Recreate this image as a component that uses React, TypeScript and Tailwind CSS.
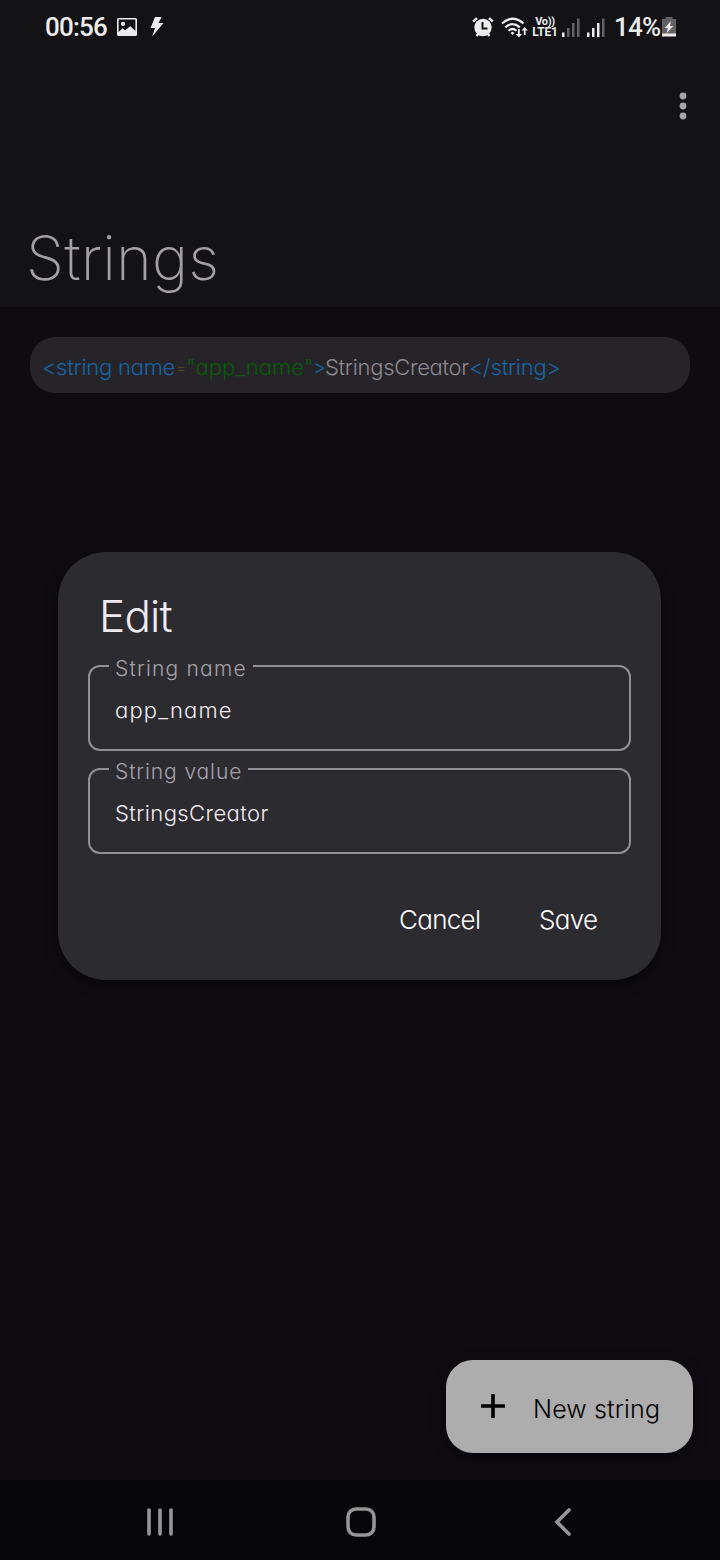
import type { ReactNode } from "react";

function StatusBar() {
  return (
    <div className="flex h-[54px] items-center justify-between pl-[45px] pr-[44px] text-[#ececec]">
      <div className="flex items-center">
        <span className="w-[62px] whitespace-nowrap font-[Roboto] text-[26px] leading-[54px] font-medium tracking-[-0.8px]">00:56</span>
        <svg className="ml-[10px]" width="20" height="18" viewBox="0 0 20 18">
          <path fillRule="evenodd" fill="currentColor" d="M1.500 0h17A1.500 1.500 0 0 1 20 1.500v15a1.500 1.500 0 0 1-1.500 1.500h-17A1.500 1.500 0 0 1 0 16.500v-15A1.500 1.500 0 0 1 1.500 0ZM1.600 1.600V14l4-3.700 2.500 2 5.200-4 5.100 4.700V1.600ZM6 3.800a2.100 2.100 0 1 1 0 4.200a2.100 2.100 0 0 1 0-4.200Z" />
        </svg>
        <svg className="ml-[13px]" width="15" height="20" viewBox="0 0 15 20">
          <path fill="currentColor" d="M5 0h6.500L8.500 6H13.500L2.200 19.500 5 11H.500Z" />
        </svg>
      </div>
      <div className="flex items-center">
        <svg width="22" height="20" viewBox="0 0 22 20">
          <circle cx="11" cy="10.500" r="8.700" fill="currentColor" />
          <path d="M1.200 4.500 5 1.200M20.800 4.500 17 1.200M4.500 19l2.500-3M17.500 19 15 16" stroke="currentColor" strokeWidth="2.400" />
          <path d="M10.500 5v6.500H15.500" fill="none" stroke="#131315" strokeWidth="2" />
        </svg>
        <svg className="ml-[7px]" width="27" height="22" viewBox="0 0 27 22">
          <g fill="none" stroke="currentColor" strokeWidth="2.200">
            <path d="M1 7.500Q11.500-2 22.500 7.500M4.300 11.300q7.200-6.300 14.500 0M7.500 14.800q4-3.600 8 0" />
          </g>
          <path fill="currentColor" d="m9.500 16.700 2-1 2 1-2 2.300ZM17 13h1.800v5h2.200l-3.100 3.500-3.100-3.500H17ZM22.800 19v-4.500h-2.200l3.100-3.500 3.100 3.500h-2.200V19Z" />
        </svg>
        <div className="ml-[4px] flex w-[26px] flex-col items-center font-[Roboto] text-[12px] leading-[11px] font-bold whitespace-nowrap">
          <span className="text-[11px] tracking-[-0.3px]">Vo))</span>
          <span className="tracking-[-0.2px]">LTE1</span>
        </div>
        <svg className="ml-[4px]" width="18" height="19" viewBox="0 0 18 19">
          <path fill="currentColor" d="M0 14.500h2.500V19H0Z" />
          <path fill="#626264" d="M5 10h2.500v9H5ZM10 5h2.500v14H10ZM15 .500h2.500V19H15Z" />
        </svg>
        <svg className="ml-[7px]" width="18" height="19" viewBox="0 0 18 19">
          <path fill="currentColor" d="M0 14.500h2.500V19H0ZM5 10h2.500v9H5ZM10 5h2.500v14H10Z" />
          <path fill="#626264" d="M15 .500h2.500V19H15Z" />
        </svg>
        <span className="ml-[9px] w-[47px] whitespace-nowrap font-[Roboto] text-[26px] leading-[54px] font-medium tracking-[-0.8px]">14%</span>
        <svg className="ml-[1px]" width="14" height="20" viewBox="0 0 14 20">
          <path fill="#626264" d="M3.500 0h7v2H14v15H0V2h3.500Z" />
          <path fill="currentColor" d="M0 16.500h14V19.500H0ZM8.800 4 2.800 11h3l-1 5 6.400-7H8Z" />
        </svg>
      </div>
    </div>
  );
}

function Field({ label, labelClass, children }: { label: string; labelClass: string; children: ReactNode }) {
  return (
    <div className="relative h-[86px] rounded-[12px] border-2 border-[#909095] pt-[29px] pl-[25px]">
      <span className={`absolute top-[-12px] left-[19px] bg-[#2c2b30] pl-[6px] text-[21px] leading-[28px] font-light whitespace-nowrap text-[#a5a2a9] ${labelClass}`}>
        {label}
      </span>
      {children}
    </div>
  );
}

function EditDialog() {
  return (
    <div className="absolute top-[552px] left-[58px] flex h-[428px] w-[603px] flex-col rounded-[48px] bg-[#2c2b30] px-[30px] pt-[40px] shadow-[0_5px_14px_rgba(0,0,0,0.45)]">
      <h2 className="pl-[11px] text-[44px] leading-[48px] font-light tracking-[-0.8px] text-[#f0eaf2]">Edit</h2>
      <div className="mt-[25px] flex flex-col gap-[17px]">
        <Field label="String name" labelClass="w-[144px] tracking-[1.2px]">
          <div className="text-[22px] leading-[28px] font-light tracking-[1.15px] text-[#f2ecf4]">app_name</div>
        </Field>
        <Field label="String value" labelClass="w-[139px] tracking-[0.9px]">
          <div className="text-[22px] leading-[28px] font-light tracking-[0.4px] text-[#f2ecf4]">StringsCreator</div>
        </Field>
      </div>
      <div className="mt-[46px] flex justify-end pr-[34px] text-[26px] leading-[40px] font-light tracking-[-0.7px] text-white">
        <button className="mr-[58px] w-[82px] text-left whitespace-nowrap">Cancel</button>
        <button className="w-[58px] text-left whitespace-nowrap">Save</button>
      </div>
    </div>
  );
}

export default function App() {
  return (
    <div className="relative flex h-[1560px] w-[720px] flex-col overflow-hidden bg-[#0e0c11] font-[Inter,sans-serif] [font-feature-settings:'cv11']">
      <header className="flex h-[307px] flex-col bg-[#131315]">
        <StatusBar />
        <div className="flex justify-end pt-[38px] pr-[33px]">
          <svg width="8" height="28" viewBox="0 0 8 28" fill="#a6a6a6">
            <circle cx="4" cy="4" r="3.400" />
            <circle cx="4" cy="14" r="3.400" />
            <circle cx="4" cy="24" r="3.400" />
          </svg>
        </div>
        <h1 className="mt-[98px] pl-[26px] text-[61px] leading-[80px] font-extralight tracking-[0.2px] text-[#a39fa4]">Strings</h1>
      </header>
      <main className="flex flex-1 flex-col px-[30px] pt-[30px]">
        <div className="flex h-[56px] items-center rounded-[25px] bg-[#262429] pt-[4px] pl-[12px] text-[22px] font-light whitespace-nowrap text-[#1764a4]">
          <span className="w-[133px] tracking-[-0.25px]">&lt;string name</span>
          <span className="w-[11px] text-[18px] text-[#4a4207]">=</span>
          <span className="w-[127px] text-[#075c07]">"app_name"</span>
          <span className="w-[12px] text-[20px]">&gt;</span>
          <span className="w-[144px] tracking-[-0.3px] text-[#8d898f]">StringsCreator</span>
          <span className="tracking-[-0.25px]">&lt;/string&gt;</span>
        </div>
        <button className="mt-auto -mr-[3px] mb-[27px] flex h-[93px] w-[247px] items-center self-end rounded-[27px] bg-[#adadad] pl-[35px] text-black shadow-[0_5px_14px_rgba(0,0,0,0.5)]">
          <svg className="mb-[1px]" width="24" height="24" viewBox="0 0 24 24">
            <path d="M12 0v24M0 12h24" stroke="black" strokeWidth="3.600" />
          </svg>
          <span className="ml-[28px] pt-[4px] text-[25px] leading-[32px] font-light tracking-[0.15px] whitespace-nowrap">New string</span>
        </button>
      </main>
      <nav className="flex h-[80px] items-center bg-[#070709] pt-[4px] pl-[147px]">
        <svg width="26" height="28" viewBox="0 0 26 28" stroke="#969696" strokeWidth="3.600" strokeLinecap="round">
          <path d="M2 2v24M13 2v24M24 2v24" />
        </svg>
        <svg className="ml-[173px]" width="30" height="30" viewBox="0 0 30 30" fill="none" stroke="#969696" strokeWidth="3.600">
          <rect x="2" y="2" width="26" height="26" rx="8" />
        </svg>
        <svg className="ml-[178px]" width="18" height="28" viewBox="0 0 18 28" fill="none" stroke="#969696" strokeWidth="3.600" strokeLinecap="round">
          <path d="M15 2 3 14l12 12" />
        </svg>
      </nav>
      <EditDialog />
    </div>
  );
}
